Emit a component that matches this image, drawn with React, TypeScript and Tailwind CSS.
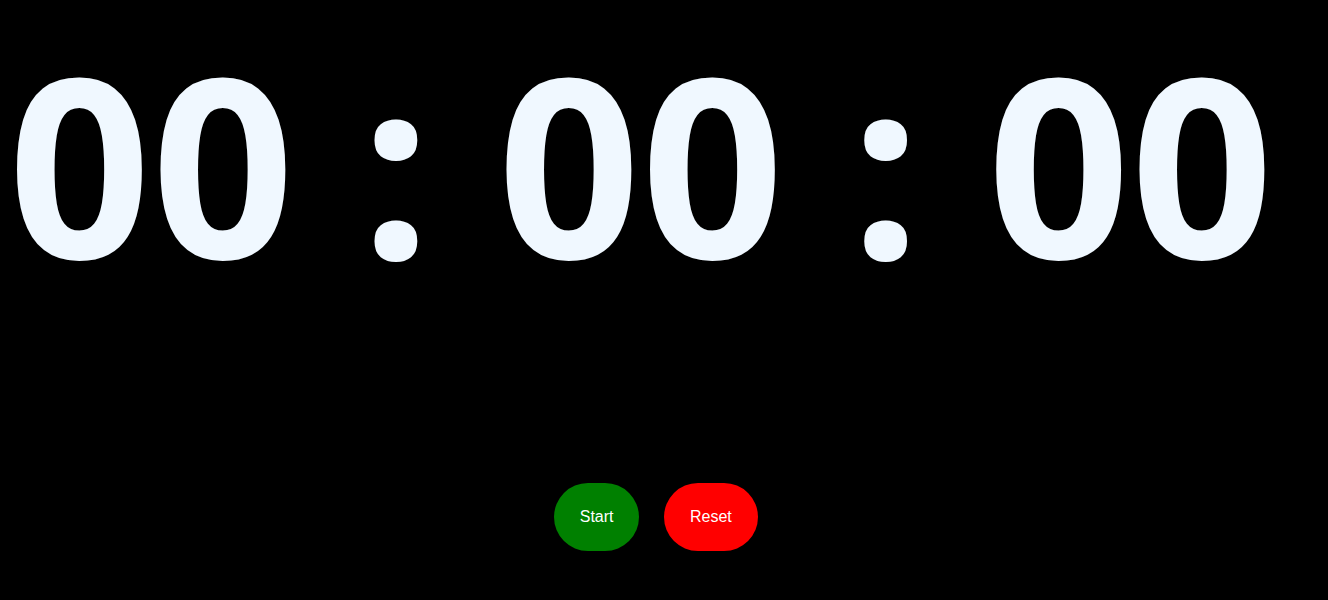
import React, { useEffect, useRef, useState } from 'react';

const pad = (n: number) => String(n).padStart(2, '0');

export default function App() {
  const [seconds, setSeconds] = useState(0);
  const [running, setRunning] = useState(false);
  const timer = useRef<number | null>(null);

  useEffect(() => {
    if (running) {
      timer.current = window.setInterval(() => setSeconds((s) => s + 1), 1000);
    }
    return () => {
      if (timer.current) window.clearInterval(timer.current);
    };
  }, [running]);

  const h = Math.floor(seconds / 3600);
  const m = Math.floor((seconds % 3600) / 60);
  const s = seconds % 60;

  return (
    <div className="min-h-screen bg-black flex flex-col items-center">
      <div
        className="self-start pl-[8px] text-[#f0f8ff] font-bold text-[250px] leading-[324px] whitespace-nowrap tracking-[0.5px]"
        style={{ fontFamily: '"Open Sans", sans-serif' }}
      >
        {pad(h)} : {pad(m)} : {pad(s)}
      </div>
      <div
        className="mt-[159px] mr-[16px] flex gap-[25px]"
        style={{ fontFamily: '"Liberation Sans", Arial, sans-serif' }}
      >
        <button
          onClick={() => setRunning((r) => !r)}
          className="bg-[#008000] text-white text-base leading-[normal] py-[25px] px-[25.5px] rounded-full"
        >
          {running ? 'Stop' : 'Start'}
        </button>
        <button
          onClick={() => {
            setRunning(false);
            setSeconds(0);
          }}
          className="bg-[#ff0000] text-white text-base leading-[normal] py-[25px] px-[26px] rounded-full"
        >
          Reset
        </button>
      </div>
    </div>
  );
}
